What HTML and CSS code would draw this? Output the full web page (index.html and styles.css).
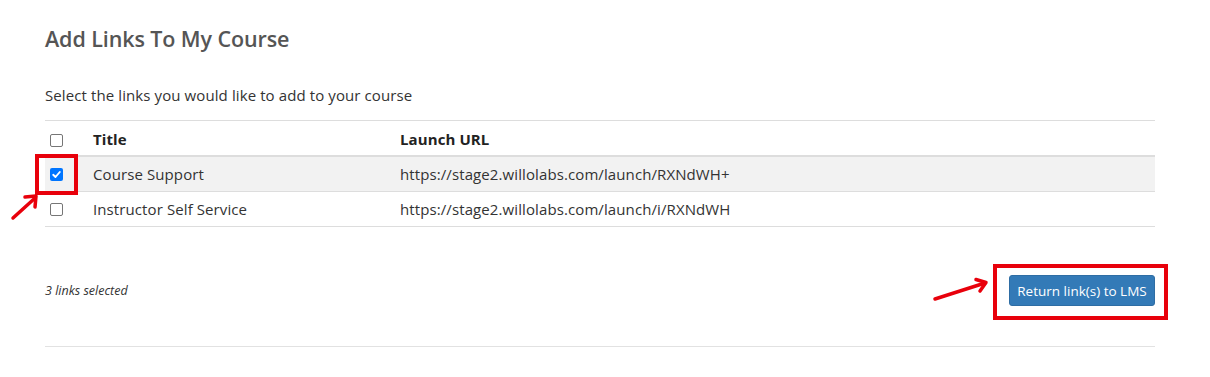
FILE: index.html
```html
<!DOCTYPE html>
<html lang="en">
<head>
<meta charset="utf-8">
<title>Add Links To My Course</title>
<link rel="stylesheet" href="styles.css">
</head>
<body>
<div class="page">
  <h2 class="title">Add Links To My Course</h2>
  <p class="lead">Select the links you would like to add to your course</p>
  <table class="links">
    <thead>
      <tr>
        <th class="col-check head-check"><span class="cb"></span></th>
        <th class="col-title">Title</th>
        <th>Launch URL</th>
      </tr>
    </thead>
    <tbody>
      <tr class="row-active">
        <td class="col-check annotated">
          <span class="cb checked"><svg viewBox="0 0 13 13" width="13" height="13"><path d="M3.2 6.8 L5.5 9 L9.8 4" fill="none" stroke="#fff" stroke-width="1.9" stroke-linecap="round" stroke-linejoin="round"/></svg></span>
          <span class="mark mark-cb"></span>
          <svg class="arrow arrow-cb" width="32" height="30" viewBox="0 0 32 30"><path d="M3 27 L24 8" stroke="#e8000b" stroke-width="3.5" stroke-linecap="round"/><path d="M15 6 L26 5 L25 16" fill="none" stroke="#e8000b" stroke-width="3.5" stroke-linecap="round" stroke-linejoin="round"/></svg>
        </td>
        <td>Course Support</td>
        <td>https://stage2.willolabs.com/launch/RXNdWH+</td>
      </tr>
      <tr>
        <td class="col-check"><span class="cb"></span></td>
        <td>Instructor Self Service</td>
        <td>https://stage2.willolabs.com/launch/i/RXNdWH</td>
      </tr>
    </tbody>
  </table>
  <div class="footer">
    <em class="count">3 links selected</em>
    <div class="action">
      <svg class="arrow arrow-btn" width="60" height="26" viewBox="0 0 60 26"><path d="M2 21 L52 5" stroke="#e8000b" stroke-width="3.5" stroke-linecap="round"/><path d="M43 1.5 L53 4.5 L47 13" fill="none" stroke="#e8000b" stroke-width="3.5" stroke-linecap="round" stroke-linejoin="round"/></svg>
      <span class="mark mark-btn"></span>
      <button class="btn" type="button">Return link(s) to LMS</button>
    </div>
  </div>
  <hr class="rule">
</div>
</body>
</html>
```
FILE: styles.css
```css
html, body {
  margin: 0;
  padding: 0;
  background: #fff;
}
body {
  font-family: "Open Sans", "Noto Sans", sans-serif;
  color: #333;
  font-size: 14px;
}
.page {
  width: 1110px;
  margin-left: 45px;
  padding-top: 24px;
}
.title {
  margin: 0;
  font-size: 21.5px;
  font-weight: 600;
  color: #555;
  line-height: 30px;
  letter-spacing: -0.1px;
}
.lead {
  margin: 31px 0 0;
  font-size: 15px;
  line-height: 20px;
  letter-spacing: 0.1px;
}
.links {
  margin-top: 15px;
  width: 100%;
  border-collapse: collapse;
  border-top: 1px solid #ddd;
  font-size: 15px;
  letter-spacing: 0.1px;
}
.links th, .links td {
  text-align: left;
  padding: 0;
  vertical-align: middle;
}
.links thead th {
  height: 33px;
  font-weight: 700;
  color: #222;
  border-bottom: 2px solid #ddd;
  padding-top: 1px;
}
.links thead th.head-check {
  padding-top: 5px;
  height: 29px;
}
.links tbody td {
  height: 34px;
  border-bottom: 1px solid #ddd;
}
.row-active td {
  background: #f2f2f2;
}
.col-check {
  width: 43px;
  padding-left: 5px !important;
}
.col-title {
  width: 307px;
}
.cb {
  display: block;
  width: 11px;
  height: 11px;
  border: 1px solid #767676;
  border-radius: 2px;
  background: #fff;
}
.cb.checked {
  width: 13px;
  height: 13px;
  border: 0;
  background: #0075ff;
}
.cb svg {
  display: block;
}
.annotated {
  position: relative;
}
.mark {
  position: absolute;
  border: 4px solid #e8000b;
  box-sizing: border-box;
  pointer-events: none;
}
.mark-cb {
  left: -10px;
  top: -3px;
  width: 43px;
  height: 41px;
}
.arrow {
  position: absolute;
  overflow: visible;
}
.arrow-cb {
  left: -35px;
  top: 34px;
}
.footer {
  display: flex;
  justify-content: space-between;
  align-items: center;
  margin-top: 48px;
}
.count {
  font-size: 12.5px;
  color: #333;
}
.action {
  position: relative;
}
.btn {
  display: block;
  font-family: "Open Sans", "Noto Sans", sans-serif;
  font-size: 13.5px;
  color: #fff;
  background: #337ab7;
  border: 1px solid #2e6da4;
  border-radius: 3px;
  height: 31px;
  padding: 0;
  width: 146px;
  white-space: nowrap;
  text-align: center;
}
.mark-btn {
  left: -16px;
  top: -11px;
  width: 175px;
  height: 56px;
}
.arrow-btn {
  left: -76px;
  top: 3px;
}
.rule {
  margin: 40px 0 0;
  border: 0;
  border-top: 1px solid #e2e2e2;
}
```
